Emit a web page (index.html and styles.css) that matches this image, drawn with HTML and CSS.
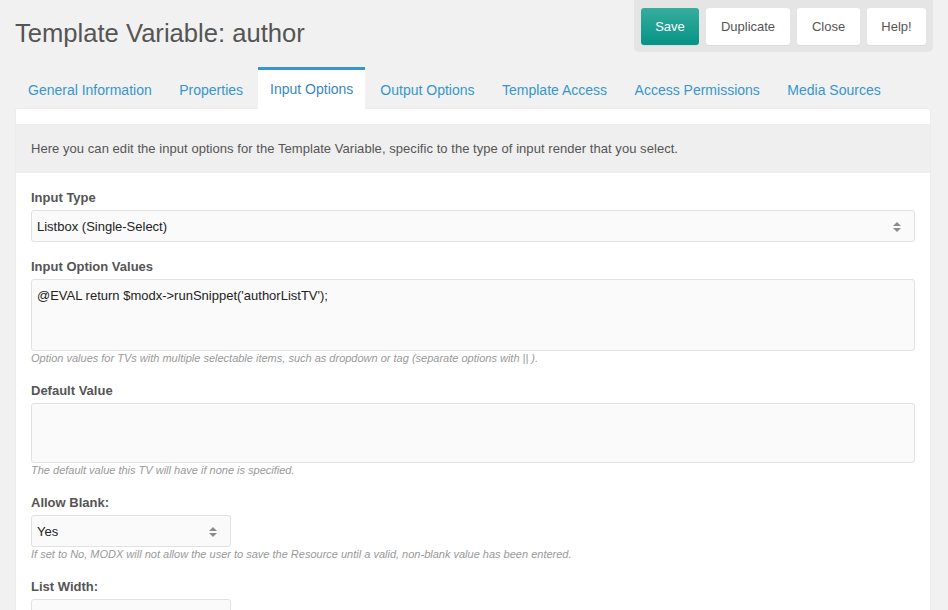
FILE: index.html
```html
<!DOCTYPE html>
<html>
<head>
<meta charset="utf-8">
<link rel="stylesheet" href="styles.css">
</head>
<body>
<div class="header">
  <h1 class="title">Template Variable: author</h1>
  <div class="actions">
    <button class="btn btn-save">Save</button>
    <button class="btn btn-dup">Duplicate</button>
    <button class="btn btn-close">Close</button>
    <button class="btn btn-help">Help!</button>
  </div>
</div>
<div class="tabs">
  <div class="tab">General Information</div>
  <div class="tab">Properties</div>
  <div class="tab active">Input Options</div>
  <div class="tab">Output Options</div>
  <div class="tab">Template Access</div>
  <div class="tab">Access Permissions</div>
  <div class="tab">Media Sources</div>
</div>
<div class="panel">
  <div class="desc">Here you can edit the input options for the Template Variable, specific to the type of input render that you select.</div>
  <div class="form">
    <div class="group first">
      <div class="label">Input Type</div>
      <div class="field select">Listbox (Single-Select)<span class="arrows"><i class="up"></i><i class="down"></i></span></div>
    </div>
    <div class="group">
      <div class="label">Input Option Values</div>
      <div class="field area area-lg">@EVAL return $modx-&gt;runSnippet('authorListTV');</div>
      <div class="help">Option values for TVs with multiple selectable items, such as dropdown or tag (separate options with || ).</div>
    </div>
    <div class="group">
      <div class="label">Default Value</div>
      <div class="field area area-md"></div>
      <div class="help">The default value this TV will have if none is specified.</div>
    </div>
    <div class="group">
      <div class="label">Allow Blank:</div>
      <div class="field select small">Yes<span class="arrows"><i class="up"></i><i class="down"></i></span></div>
      <div class="help">If set to No, MODX will not allow the user to save the Resource until a valid, non-blank value has been entered.</div>
    </div>
    <div class="group">
      <div class="label">List Width:</div>
      <div class="field select small"></div>
    </div>
  </div>
</div>
</body>
</html>
```
FILE: styles.css
```css
html, body {
  margin: 0;
  padding: 0;
  background: #f1f1f1;
  font-family: "Liberation Sans", Arial, sans-serif;
  color: #555;
  overflow: hidden;
}
.header {
  display: flex;
  justify-content: space-between;
  align-items: flex-start;
  height: 52px;
  padding: 0 15px;
}
.title {
  margin: 0;
  padding-top: 18px;
  font-size: 25.6px;
  font-weight: normal;
  line-height: 30px;
  color: #555;
}
.actions {
  display: flex;
  flex: none;
  gap: 7px;
  padding: 8px 7px 7px 7px;
  background: #e5e5e5;
  border-radius: 0 0 5px 5px;
}
.btn {
  box-sizing: border-box;
  height: 37px;
  border: none;
  border-radius: 3px;
  background: #fff;
  color: #555;
  font-family: "Liberation Sans", Arial, sans-serif;
  font-size: 13px;
  padding: 0;
  text-align: center;
  box-shadow: 0 1px 1px rgba(0,0,0,0.04);
}
.btn-save {
  width: 58px;
  background: linear-gradient(#36ad9e, #059385);
  color: #fff;
}
.btn-dup { width: 84px; }
.btn-close { width: 63px; }
.btn-help { width: 59px; }
.tabs {
  display: flex;
  margin: 15px 0 0 16px;
  gap: 2.5px;
}
.tab {
  height: 39px;
  line-height: 41px;
  padding: 0 12.5px;
  border-top: 3px solid transparent;
  font-size: 14px;
  color: #3697cd;
}
.tab:first-child {
  padding-left: 12px;
}
.tab.active {
  padding: 0 12px;
  background: #fff;
  border-top-color: #3697cd;
  color: #3a86bd;
  line-height: 39px;
}
.panel {
  margin: 0 18px 0 16px;
  background: #fff;
  border-radius: 0 3px 0 0;
  padding-top: 15px;
  box-shadow: 0 0 2px rgba(0,0,0,0.08);
  min-height: 600px;
}
.desc {
  background: #efefef;
  height: 49px;
  line-height: 50px;
  padding: 0 15px;
  font-size: 13px;
  letter-spacing: 0.05px;
  color: #555;
}
.form {
  padding: 15px 15px 0 15px;
}
.group {
  margin-bottom: 16px;
}
.group.first {
  margin-bottom: 15px;
}
.label {
  font-size: 13px;
  font-weight: bold;
  line-height: 18px;
  padding-top: 1px;
  color: #555;
  margin-bottom: 3px;
}
.field {
  position: relative;
  box-sizing: border-box;
  background: #fafafa;
  border: 1px solid #e2e2e2;
  border-radius: 3px;
  font-size: 13px;
  color: #222;
  padding: 0 5px;
}
.select {
  height: 32px;
  line-height: 31px;
}
.select.small {
  width: 200px;
}
.area {
  padding-top: 8px;
  line-height: 16px;
}
.area-lg { height: 72px; }
.area-md { height: 60px; }
.arrows {
  position: absolute;
  right: 13px;
  top: 11px;
  display: flex;
  flex-direction: column;
  gap: 2px;
}
.arrows i {
  display: block;
  width: 0;
  height: 0;
  border-left: 4.5px solid transparent;
  border-right: 4.5px solid transparent;
}
.arrows .up { border-bottom: 4px solid #8c8c8c; }
.arrows .down { border-top: 4px solid #8c8c8c; }
.help {
  font-size: 11px;
  font-style: italic;
  color: #999;
  line-height: 14px;
}
```
